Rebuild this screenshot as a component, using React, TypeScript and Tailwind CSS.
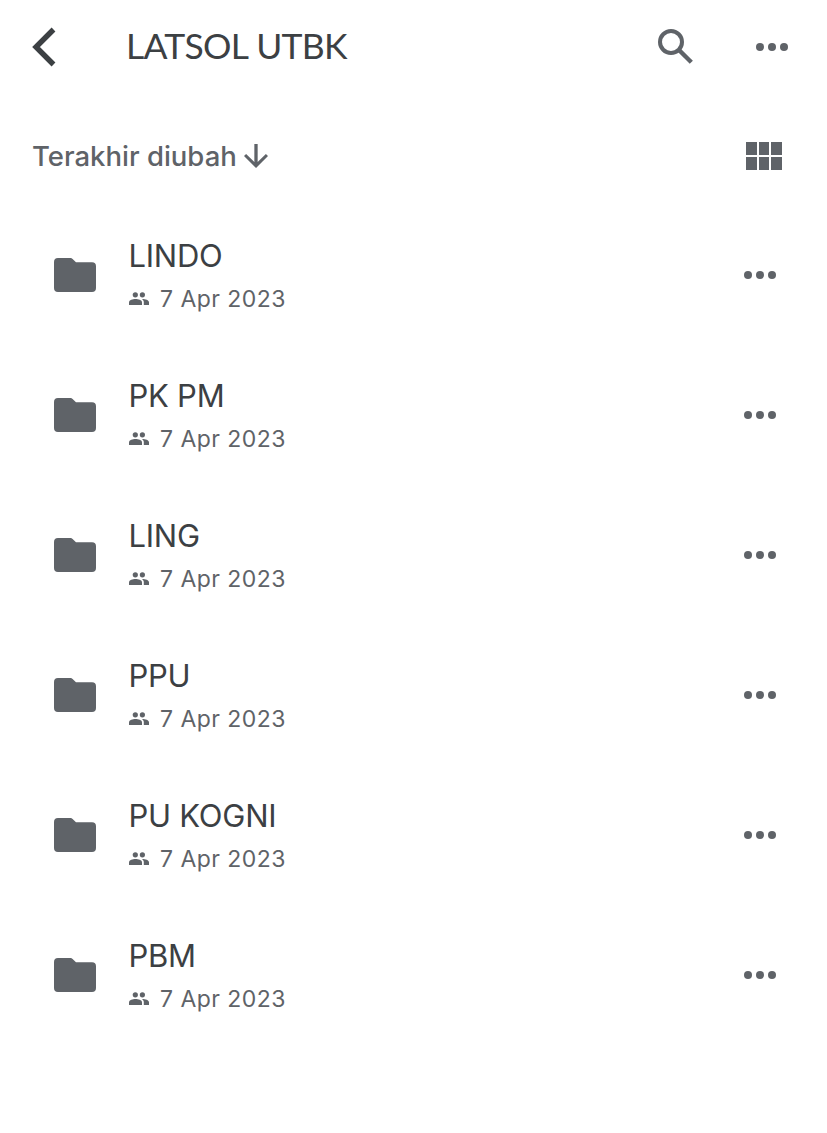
const folders = ['LINDO', 'PK PM', 'LING', 'PPU', 'PU KOGNI', 'PBM']

function Dots() {
  return (
    <svg width="32" height="8" viewBox="0 0 32 8" fill="currentColor">
      <circle cx="4" cy="4" r="4" />
      <circle cx="16" cy="4" r="4" />
      <circle cx="28" cy="4" r="4" />
    </svg>
  )
}

function FolderIcon() {
  return (
    <svg width="42" height="34" viewBox="0 0 42 34" fill="currentColor">
      <path d="M4 0h12.5a3 3 0 0 1 2.1.9L22 4.2h16a4 4 0 0 1 4 4V30a4 4 0 0 1-4 4H4a4 4 0 0 1-4-4V4a4 4 0 0 1 4-4z" />
    </svg>
  )
}

function PeopleIcon() {
  return (
    <svg className="mb-0.5" width="20" height="13" viewBox="0 0 20 13" fill="currentColor">
      <circle cx="6.3" cy="2.8" r="2.6" />
      <circle cx="13.4" cy="2.8" r="2.6" />
      <path d="M6.5 7C3.8 7 0 8 0 10.3V13h13v-2.7C13 8 9.2 7 6.5 7z" />
      <path d="M13 7c1.1.8 1.8 1.9 1.8 3.3V13H20v-2.7C20 8.2 16.5 7 13 7z" />
    </svg>
  )
}

function FolderRow({ name }: { name: string }) {
  return (
    <li className="flex h-[140px] items-center pr-[51px] pl-[54px]">
      <FolderIcon />
      <div className="ml-[33px] flex-1 pt-[5px]">
        <div className="-ml-[0.5px] text-[31px] leading-[40px] tracking-[-0.25px] text-[#3c4043]">{name}</div>
        <div className="mt-[3px] flex items-center gap-[11px] text-[23px] leading-[40px] tracking-[0.45px]">
          <PeopleIcon />
          <span>7 Apr 2023</span>
        </div>
      </div>
      <button>
        <Dots />
      </button>
    </li>
  )
}

export default function App() {
  return (
    <div className="min-h-[1133px] w-[827px] bg-white font-['Inter',sans-serif] text-[#5f6368]">
      <header className="flex h-[94px] items-center pr-[39px] pl-8">
        <button className="text-[#3c4043]">
          <svg width="24" height="40" viewBox="0 0 24 40" fill="none" stroke="currentColor" strokeWidth="5.4">
            <path d="M21.5 2.500L4 20l17.500 17.500" />
          </svg>
        </button>
        <h1 className="ml-[70px] flex-1 pb-[3px] font-['Lato',sans-serif] text-[35.5px] leading-[48px] tracking-[-0.7px] text-[#3c4043] [word-spacing:0.5px]">
          LATSOL UTBK
        </h1>
        <button className="mr-14">
          <svg width="48" height="48" viewBox="0 0 48 48" fill="none" stroke="currentColor" strokeWidth="4">
            <circle cx="19" cy="19" r="11" />
            <path d="M26.500 26.500L39.300 39.300" strokeWidth="4.400" />
          </svg>
        </button>
        <button>
          <Dots />
        </button>
      </header>

      <div className="mt-[31px] flex h-[62px] items-center justify-between pr-[45px] pl-8">
        <button className="flex items-center gap-[7px] text-[27.5px] leading-[40px] font-medium">
          <span>Terakhir diubah</span>
          <svg width="24" height="24" viewBox="4 4 16 16" fill="currentColor">
            <path d="M20 12l-1.410-1.410L13.100 16.070V4h-2.200v12.070l-5.490-5.480L4 12l8 8 8-8z" />
          </svg>
        </button>
        <div className="grid grid-cols-[11px_10px_11px] gap-0.5">
          {[0, 1, 2, 3, 4, 5].map((i) => (
            <span key={i} className="h-[13px] bg-[#5f6368]" />
          ))}
        </div>
      </div>

      <ul className="mt-[18px]">
        {folders.map((name) => (
          <FolderRow key={name} name={name} />
        ))}
      </ul>
    </div>
  )
}
